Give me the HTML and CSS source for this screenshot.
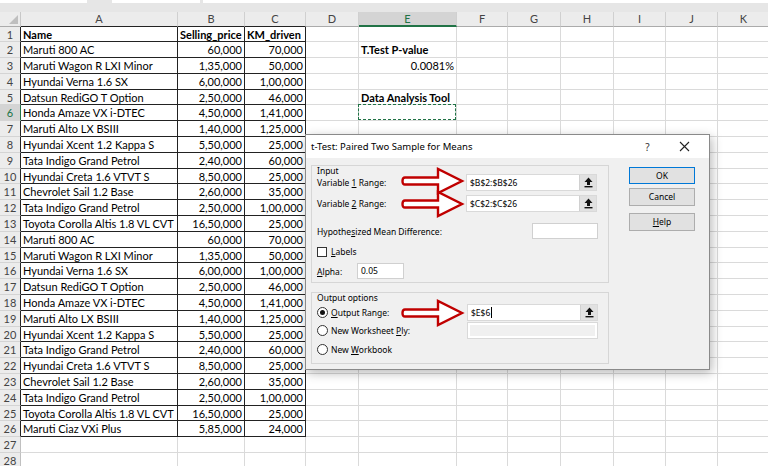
FILE: index.html
```html
<!DOCTYPE html>
<html>
<head>
<meta charset="utf-8">
<link rel="stylesheet" href="styles.css">
</head>
<body>
<div class="app">
  <div class="topbar">
    <div class="fbox w1"></div>
    <div class="fbox w2"></div>
    <div class="fbox w3"></div>
  </div>
  <div class="sheet">
    <div class="corner"><span class="tri"></span></div>
    <div class="ch b">A</div><div class="ch b">B</div><div class="ch b">C</div><div class="ch">D</div><div class="ch selc">E</div><div class="ch">F</div><div class="ch">G</div><div class="ch">H</div><div class="ch">I</div><div class="ch">J</div><div class="ch last">K</div>

    <div class="rh b">1</div><div class="c t bold">Name</div><div class="c t bold">Selling_price</div><div class="c t bold">KM_driven</div><div class="c"></div><div class="c"></div><div class="c"></div><div class="c"></div><div class="c"></div><div class="c"></div><div class="c"></div><div class="c"></div>
    <div class="rh b">2</div><div class="c t">Maruti 800 AC</div><div class="c t n">60,000</div><div class="c t n">70,000</div><div class="c"></div><div class="c bold">T.Test P-value</div><div class="c"></div><div class="c"></div><div class="c"></div><div class="c"></div><div class="c"></div><div class="c"></div>
    <div class="rh b">3</div><div class="c t">Maruti Wagon R LXI Minor</div><div class="c t n">1,35,000</div><div class="c t n">50,000</div><div class="c"></div><div class="c n">0.0081%</div><div class="c"></div><div class="c"></div><div class="c"></div><div class="c"></div><div class="c"></div><div class="c"></div>
    <div class="rh b">4</div><div class="c t">Hyundai Verna 1.6 SX</div><div class="c t n">6,00,000</div><div class="c t n">1,00,000</div><div class="c"></div><div class="c"></div><div class="c"></div><div class="c"></div><div class="c"></div><div class="c"></div><div class="c"></div><div class="c"></div>
    <div class="rh b">5</div><div class="c t">Datsun RediGO T Option</div><div class="c t n">2,50,000</div><div class="c t n">46,000</div><div class="c"></div><div class="c bold">Data Analysis Tool</div><div class="c"></div><div class="c"></div><div class="c"></div><div class="c"></div><div class="c"></div><div class="c"></div>
    <div class="rh b selr">6</div><div class="c t">Honda Amaze VX i-DTEC</div><div class="c t n">4,50,000</div><div class="c t n">1,41,000</div><div class="c"></div><div class="c sel"></div><div class="c"></div><div class="c"></div><div class="c"></div><div class="c"></div><div class="c"></div><div class="c"></div>
    <div class="rh b">7</div><div class="c t">Maruti Alto LX BSIII</div><div class="c t n">1,40,000</div><div class="c t n">1,25,000</div><div class="c"></div><div class="c"></div><div class="c"></div><div class="c"></div><div class="c"></div><div class="c"></div><div class="c"></div><div class="c"></div>
    <div class="rh b">8</div><div class="c t">Hyundai Xcent 1.2 Kappa S</div><div class="c t n">5,50,000</div><div class="c t n">25,000</div><div class="c"></div><div class="c"></div><div class="c"></div><div class="c"></div><div class="c"></div><div class="c"></div><div class="c"></div><div class="c"></div>
    <div class="rh b">9</div><div class="c t">Tata Indigo Grand Petrol</div><div class="c t n">2,40,000</div><div class="c t n">60,000</div><div class="c"></div><div class="c"></div><div class="c"></div><div class="c"></div><div class="c"></div><div class="c"></div><div class="c"></div><div class="c"></div>
    <div class="rh b">10</div><div class="c t">Hyundai Creta 1.6 VTVT S</div><div class="c t n">8,50,000</div><div class="c t n">25,000</div><div class="c"></div><div class="c"></div><div class="c"></div><div class="c"></div><div class="c"></div><div class="c"></div><div class="c"></div><div class="c"></div>
    <div class="rh b">11</div><div class="c t">Chevrolet Sail 1.2 Base</div><div class="c t n">2,60,000</div><div class="c t n">35,000</div><div class="c"></div><div class="c"></div><div class="c"></div><div class="c"></div><div class="c"></div><div class="c"></div><div class="c"></div><div class="c"></div>
    <div class="rh b">12</div><div class="c t">Tata Indigo Grand Petrol</div><div class="c t n">2,50,000</div><div class="c t n">1,00,000</div><div class="c"></div><div class="c"></div><div class="c"></div><div class="c"></div><div class="c"></div><div class="c"></div><div class="c"></div><div class="c"></div>
    <div class="rh b">13</div><div class="c t">Toyota Corolla Altis 1.8 VL CVT</div><div class="c t n">16,50,000</div><div class="c t n">25,000</div><div class="c"></div><div class="c"></div><div class="c"></div><div class="c"></div><div class="c"></div><div class="c"></div><div class="c"></div><div class="c"></div>
    <div class="rh b">14</div><div class="c t">Maruti 800 AC</div><div class="c t n">60,000</div><div class="c t n">70,000</div><div class="c"></div><div class="c"></div><div class="c"></div><div class="c"></div><div class="c"></div><div class="c"></div><div class="c"></div><div class="c"></div>
    <div class="rh b">15</div><div class="c t">Maruti Wagon R LXI Minor</div><div class="c t n">1,35,000</div><div class="c t n">50,000</div><div class="c"></div><div class="c"></div><div class="c"></div><div class="c"></div><div class="c"></div><div class="c"></div><div class="c"></div><div class="c"></div>
    <div class="rh b">16</div><div class="c t">Hyundai Verna 1.6 SX</div><div class="c t n">6,00,000</div><div class="c t n">1,00,000</div><div class="c"></div><div class="c"></div><div class="c"></div><div class="c"></div><div class="c"></div><div class="c"></div><div class="c"></div><div class="c"></div>
    <div class="rh b">17</div><div class="c t">Datsun RediGO T Option</div><div class="c t n">2,50,000</div><div class="c t n">46,000</div><div class="c"></div><div class="c"></div><div class="c"></div><div class="c"></div><div class="c"></div><div class="c"></div><div class="c"></div><div class="c"></div>
    <div class="rh b">18</div><div class="c t">Honda Amaze VX i-DTEC</div><div class="c t n">4,50,000</div><div class="c t n">1,41,000</div><div class="c"></div><div class="c"></div><div class="c"></div><div class="c"></div><div class="c"></div><div class="c"></div><div class="c"></div><div class="c"></div>
    <div class="rh b">19</div><div class="c t">Maruti Alto LX BSIII</div><div class="c t n">1,40,000</div><div class="c t n">1,25,000</div><div class="c"></div><div class="c"></div><div class="c"></div><div class="c"></div><div class="c"></div><div class="c"></div><div class="c"></div><div class="c"></div>
    <div class="rh b">20</div><div class="c t">Hyundai Xcent 1.2 Kappa S</div><div class="c t n">5,50,000</div><div class="c t n">25,000</div><div class="c"></div><div class="c"></div><div class="c"></div><div class="c"></div><div class="c"></div><div class="c"></div><div class="c"></div><div class="c"></div>
    <div class="rh b">21</div><div class="c t">Tata Indigo Grand Petrol</div><div class="c t n">2,40,000</div><div class="c t n">60,000</div><div class="c"></div><div class="c"></div><div class="c"></div><div class="c"></div><div class="c"></div><div class="c"></div><div class="c"></div><div class="c"></div>
    <div class="rh b">22</div><div class="c t">Hyundai Creta 1.6 VTVT S</div><div class="c t n">8,50,000</div><div class="c t n">25,000</div><div class="c"></div><div class="c"></div><div class="c"></div><div class="c"></div><div class="c"></div><div class="c"></div><div class="c"></div><div class="c"></div>
    <div class="rh b">23</div><div class="c t">Chevrolet Sail 1.2 Base</div><div class="c t n">2,60,000</div><div class="c t n">35,000</div><div class="c"></div><div class="c"></div><div class="c"></div><div class="c"></div><div class="c"></div><div class="c"></div><div class="c"></div><div class="c"></div>
    <div class="rh b">24</div><div class="c t">Tata Indigo Grand Petrol</div><div class="c t n">2,50,000</div><div class="c t n">1,00,000</div><div class="c"></div><div class="c"></div><div class="c"></div><div class="c"></div><div class="c"></div><div class="c"></div><div class="c"></div><div class="c"></div>
    <div class="rh b">25</div><div class="c t">Toyota Corolla Altis 1.8 VL CVT</div><div class="c t n">16,50,000</div><div class="c t n">25,000</div><div class="c"></div><div class="c"></div><div class="c"></div><div class="c"></div><div class="c"></div><div class="c"></div><div class="c"></div><div class="c"></div>
    <div class="rh b">26</div><div class="c t">Maruti Ciaz VXi Plus</div><div class="c t n">5,85,000</div><div class="c t n">24,000</div><div class="c"></div><div class="c"></div><div class="c"></div><div class="c"></div><div class="c"></div><div class="c"></div><div class="c"></div><div class="c"></div>
    <div class="rh">27</div><div class="c"></div><div class="c"></div><div class="c"></div><div class="c"></div><div class="c"></div><div class="c"></div><div class="c"></div><div class="c"></div><div class="c"></div><div class="c"></div><div class="c"></div>
    <div class="rh">28</div><div class="c"></div><div class="c"></div><div class="c"></div><div class="c"></div><div class="c"></div><div class="c"></div><div class="c"></div><div class="c"></div><div class="c"></div><div class="c"></div><div class="c"></div>
  </div>

  <div class="dialog">
    <div class="titlebar">
      <span class="title">t-Test: Paired Two Sample for Means</span>
      <span class="help">?</span>
      <span class="close"><svg width="11" height="11" viewBox="0 0 11 11"><path d="M1 1 L10 10 M10 1 L1 10" stroke="#222" stroke-width="1.1" fill="none"/></svg></span>
    </div>
    <div class="dbody">
      <div class="groups">
        <div class="group gin">
          <div class="glabel">Input</div>
          <div class="frow r1">
            <span class="lbl">Variable <u>1</u> Range:</span>
            <span class="refbox"><span class="reftext">$B$2:$B$26</span><span class="refbtn"><svg width="9" height="11" viewBox="0 0 9 11"><path d="M4.5 0.5 L8.5 5 H6 V8 H3 V5 H0.5 Z" fill="#111"/><rect x="0.5" y="9" width="8" height="1.4" fill="#111"/></svg></span></span>
          </div>
          <div class="frow r2">
            <span class="lbl">Variable <u>2</u> Range:</span>
            <span class="refbox"><span class="reftext">$C$2:$C$26</span><span class="refbtn"><svg width="9" height="11" viewBox="0 0 9 11"><path d="M4.5 0.5 L8.5 5 H6 V8 H3 V5 H0.5 Z" fill="#111"/><rect x="0.5" y="9" width="8" height="1.4" fill="#111"/></svg></span></span>
          </div>
          <div class="frow r3">
            <span class="lbl">Hypothe<u>s</u>ized Mean Difference:</span>
            <span class="tbox hyp"></span>
          </div>
          <div class="frow r4">
            <span class="chk"></span><span><u>L</u>abels</span>
          </div>
          <div class="frow r5">
            <span class="lbl alpha"><u>A</u>lpha:</span>
            <span class="tbox alp">0.05</span>
          </div>
        </div>
        <div class="group gout">
          <div class="glabel">Output options</div>
          <div class="frow o1">
            <span class="radio on"></span><span class="rlbl"><u>O</u>utput Range:</span>
            <span class="refbox"><span class="reftext">$E$6<span class="caret"></span></span><span class="refbtn"><svg width="9" height="11" viewBox="0 0 9 11"><path d="M4.5 0.5 L8.5 5 H6 V8 H3 V5 H0.5 Z" fill="#111"/><rect x="0.5" y="9" width="8" height="1.4" fill="#111"/></svg></span></span>
          </div>
          <div class="frow o2">
            <span class="radio"></span><span class="rlbl">New Worksheet <u>P</u>ly:</span>
            <span class="disbox"><span class="disin"></span></span>
          </div>
          <div class="frow o3">
            <span class="radio"></span><span class="rlbl">New <u>W</u>orkbook</span>
          </div>
        </div>
      </div>
      <div class="buttons">
        <div class="btn ok">OK</div>
        <div class="btn cancel">Cancel</div>
        <div class="btn helpb"><u>H</u>elp</div>
      </div>
    </div>
    <svg class="arrow a1" width="64" height="28" viewBox="0 0 64 28"><path d="M4 10.5 H37 V2 L61 14 L37 26 V17.5 H4 Q1.5 17.5 1.5 14 Q1.5 10.5 4 10.5 Z" fill="#fff" stroke="#c00000" stroke-width="2.4" stroke-linejoin="miter"/></svg>
    <svg class="arrow a2" width="64" height="28" viewBox="0 0 64 28"><path d="M4 10.5 H37 V2 L61 14 L37 26 V17.5 H4 Q1.5 17.5 1.5 14 Q1.5 10.5 4 10.5 Z" fill="#fff" stroke="#c00000" stroke-width="2.4" stroke-linejoin="miter"/></svg>
    <svg class="arrow a3" width="64" height="28" viewBox="0 0 64 28"><path d="M4 10.5 H37 V2 L61 14 L37 26 V17.5 H4 Q1.5 17.5 1.5 14 Q1.5 10.5 4 10.5 Z" fill="#fff" stroke="#c00000" stroke-width="2.4" stroke-linejoin="miter"/></svg>
  </div>
</div>
</body>
</html>
```
FILE: styles.css
```css
* { box-sizing: border-box; }
html, body { margin: 0; padding: 0; }
body {
  width: 768px;
  height: 466px;
  overflow: hidden;
  background: #fff;
  font-family: "Lato", "Liberation Sans", sans-serif;
  color: #000;
}
.app { position: relative; width: 768px; height: 466px; overflow: hidden; }

.topbar {
  height: 12px;
  background: #e6e6e6;
  display: flex;
  align-items: flex-start;
}
.fbox { height: 3px; background: #fff; }
.w1 { width: 87px; }
.w2 { width: 88px; margin-left: 25px; }
.w3 { flex: 1; margin-left: 3px; }

.sheet {
  display: grid;
  grid-template-columns: 21px 157px 67px 61px 53px 98px 51px 53px 53px 52px 52px 52px;
  grid-template-rows: 14.5px;
  grid-auto-rows: 15.8px;
  font-size: 11px;
}
.corner {
  position: relative;
  background: #ececec;
  border-right: 1px solid #c8c8c8;
  border-bottom: 1px solid #ababab;
}
.tri {
  position: absolute;
  right: 2px;
  bottom: 2px;
  width: 0;
  height: 0;
  border-left: 9px solid transparent;
  border-bottom: 9px solid #bfbfbf;
}
.ch {
  background: #ececec;
  color: #444;
  text-align: center;
  line-height: 13px;
  font-size: 11px;
  border-right: 1px solid #d0d0d0;
  border-bottom: 1px solid #ababab;
}
.ch.b { border-bottom-color: #222; }
.ch.selc {
  background: #d4d4d4;
  color: #217346;
  border-bottom: 2px solid #217346;
}
.rh {
  background: #ececec;
  color: #444;
  text-align: center;
  line-height: 15px;
  font-size: 11px;
  border-right: 1px solid #c0c0c0;
  border-bottom: 1px solid #d4d4d4;
}
.rh.b { border-right-color: #222; }
.rh.selr {
  background: #d4d4d4;
  color: #217346;
  border-right: 1px solid #217346;
}
.c {
  border-right: 1px solid #dadada;
  border-bottom: 1px solid #dadada;
  padding: 0 2px;
  line-height: 15px;
  white-space: nowrap;
  overflow: visible;
}
.c.t { border-color: #222; }
.n { text-align: right; }
.bold { font-weight: 700; }
.sel { position: relative; }
.sel::after {
  content: "";
  position: absolute;
  left: -1px;
  top: -1px;
  right: 0;
  bottom: 0;
  border: 1.5px dashed #217346;
}

/* Dialog */
.dialog {
  position: absolute;
  left: 305px;
  top: 134px;
  width: 405px;
  height: 236px;
  background: #f0f0f0;
  border: 1px solid #8a8a8a;
  box-shadow: 2px 3px 10px rgba(0, 0, 0, 0.28);
  font-family: "Noto Sans", "Liberation Sans", sans-serif;
  font-size: 8.5px;
  color: #000;
}
.titlebar {
  height: 23px;
  background: #fff;
  display: flex;
  align-items: center;
  padding-left: 5px;
}
.title { font-size: 9.5px; flex: 1; }
.help { width: 37px; font-size: 10px; color: #333; text-align: center; margin-right: 4px; }
.close { width: 28px; display: flex; justify-content: center; margin-right: 11px; }

.dbody {
  display: flex;
  padding: 7px 0 0 5px;
}
.groups { width: 298px; }
.group {
  border: 1px solid #d6d6d6;
  padding: 0 5px;
}
.gin { height: 118px; }
.gout { height: 72px; margin-top: 9px; }
.glabel { line-height: 9px; height: 8px; color: #000; }
.frow { display: flex; align-items: center; }
.r1 { height: 17px; }
.r2 { height: 17px; margin-top: 4px; }
.r3 { height: 16px; margin-top: 11px; }
.r4 { height: 17px; margin-top: 4px; }
.r5 { height: 16px; margin-top: 3px; }
.lbl { width: 149px; }
.r3 .lbl { width: 215px; }
.lbl.alpha { width: 40px; }

.refbox {
  display: flex;
  width: 131px;
  height: 17px;
  background: #fff;
  border: 1px solid #d9d9d9;
}
.reftext { flex: 1; padding-left: 3px; line-height: 15px; display: flex; align-items: center; }
.caret { width: 1px; height: 11px; background: #000; margin-left: 0.5px; }
.refbtn {
  width: 17px;
  height: 15px;
  background: #e1e1e1;
  border-left: 1px solid #d0d0d0;
  display: flex;
  align-items: center;
  justify-content: center;
}
.tbox {
  height: 16px;
  background: #fff;
  border: 1px solid #d0d0d0;
  padding-left: 3px;
  line-height: 14px;
}
.hyp { width: 66px; }
.alp { width: 47px; }
.chk {
  width: 10px;
  height: 10px;
  border: 1px solid #333;
  background: #fff;
  margin-right: 4px;
}
.o1 { height: 17px; margin-top: 3px; }
.o2 { height: 17px; margin-top: 1px; }
.o3 { height: 17px; margin-top: 2px; }
.radio {
  width: 11px;
  height: 11px;
  border: 1px solid #333;
  border-radius: 50%;
  background: #fff;
  margin-right: 3px;
  display: flex;
  align-items: center;
  justify-content: center;
}
.radio.on::after {
  content: "";
  width: 5px;
  height: 5px;
  border-radius: 50%;
  background: #111;
}
.rlbl { width: 136px; }
.disbox {
  width: 131px;
  height: 17px;
  background: #fff;
  border: 1px solid #d9d9d9;
  padding: 2px;
}
.disin { display: block; height: 11px; background: #f0f0f0; }

.buttons {
  margin-left: 20px;
  width: 66px;
  display: flex;
  flex-direction: column;
}
.btn {
  height: 18px;
  background: #e1e1e1;
  border: 1px solid #adadad;
  text-align: center;
  line-height: 16px;
}
.ok { margin-top: 2px; height: 17px; border: 1px solid #0078d7; line-height: 15px; }
.cancel { margin-top: 4px; }
.helpb { margin-top: 7px; }

.arrow { position: absolute; left: 95px; }
.a1 { top: 32px; }
.a2 { top: 55px; }
.a3 { top: 164px; }
```
